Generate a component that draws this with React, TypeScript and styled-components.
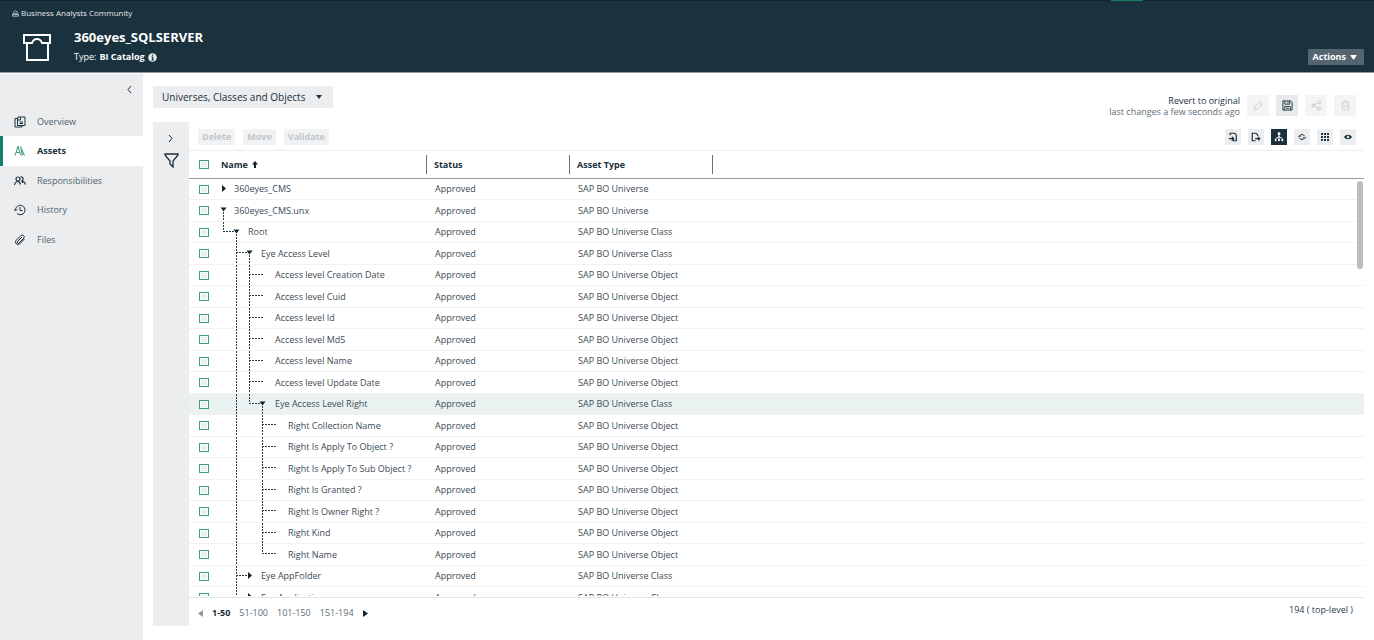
import React from 'react';
import styled, { createGlobalStyle, css } from 'styled-components';

const Global = createGlobalStyle`
  * { box-sizing: border-box; }
  body { margin: 0; background: #fff; color: #1b303d; font: 12px/16px "Open Sans", "Noto Sans", sans-serif; }
  button { font: inherit; color: inherit; border: 0; padding: 0; background: none; cursor: pointer; }
  a { color: inherit; text-decoration: none; }
`;

const Page = styled.div`
  height: 100vh;
  display: flex;
  flex-direction: column;
  overflow: hidden;
`;

/* ---------- header ---------- */
const Header = styled.header`
  flex: none;
  height: 73px;
  background: #1a313e;
  color: #fff;
  border-top: 1px solid #12222d;
  border-bottom: 1px solid #8d989f;
  display: grid;
  grid-template-columns: 74px 1fr auto;
  grid-template-rows: 24px 1fr;
  position: relative;
`;
const ActiveMark = styled.span`
  position: absolute;
  top: -1px;
  right: 231px;
  width: 32px;
  height: 1px;
  background: #16805f;
`;
const Crumb = styled.a`
  grid-column: 1 / -1;
  display: flex;
  align-items: center;
  gap: 2px;
  padding-left: 12px;
  font-size: 8px;
  line-height: 12px;
  color: #e4e9ec;
`;
const Logo = styled.div`
  padding: 9px 0 0 23px;
  line-height: 0;
`;
const Title = styled.h1`
  margin: 3px 0 0;
  font-size: 13px;
  line-height: 18px;
  font-weight: 700;
`;
const TypeLine = styled.div`
  display: flex;
  align-items: center;
  gap: 3px;
  margin-top: 3px;
  font-size: 9px;
  line-height: 16px;
`;
const ActionsButton = styled.button`
  align-self: end;
  display: flex;
  align-items: center;
  gap: 4px;
  height: 16px;
  margin: 0 10px 7px 0;
  padding: 0 7px 0 5px;
  background: #54656f;
  color: #fff;
  font-size: 9px;
  font-weight: 700;
`;

/* ---------- sidebar ---------- */
const Body = styled.div`
  flex: 1;
  min-height: 0;
  display: flex;
`;
const Sidebar = styled.nav`
  flex: none;
  width: 143px;
  margin-top: 1px;
  background: #ebedee;
`;
const Collapse = styled.button`
  display: block;
  margin: 9px 10px 12px auto;
  width: 8px;
  height: 12px;
  line-height: 0;
`;
const NavItem = styled.a<{ $active?: boolean }>`
  display: flex;
  align-items: center;
  gap: 11px;
  height: 29px;
  padding-left: 11px;
  border-left: 3px solid transparent;
  font-size: 9px;
  color: #4f626d;
  &:nth-of-type(even) { height: 30px; }
  svg { flex: none; color: #1b303d; }
  ${p => p.$active && css`
    background: #fff;
    border-color: #12806a;
    color: #1b303d;
    font-weight: 700;
    svg { color: #2c9379; }
  `}
`;

/* ---------- main ---------- */
const Main = styled.main`
  flex: 1;
  min-width: 0;
  display: flex;
  flex-direction: column;
  padding: 13px 10px 14px 10px;
`;
const TopBar = styled.div`
  display: flex;
  justify-content: space-between;
  height: 36px;
`;
const ViewSelect = styled.button`
  display: flex;
  align-items: center;
  gap: 11px;
  height: 22px;
  padding: 0 11px 0 9px;
  background: #ebedee;
  font-size: 10px;
`;
const TopActions = styled.div`
  display: flex;
  align-items: flex-start;
  gap: 7px;
  padding: 9px 8px 0 0;
`;
const Revert = styled.div`
  display: flex;
  flex-direction: column;
  align-items: flex-end;
  font-size: 9px;
  line-height: 11px;
  color: #5d6e78;
  button { color: #1b303d; line-height: 11px; }
`;
const SquareButton = styled.button<{ $faded?: boolean }>`
  display: grid;
  place-items: center;
  width: 22px;
  height: 21px;
  background: ${p => (p.$faded ? '#f3f4f5' : '#e8ebec')};
  color: ${p => (p.$faded ? '#c9ced1' : '#1b303d')};
`;
const Panel = styled.div`
  flex: 1;
  min-height: 0;
  display: flex;
`;
const FilterRail = styled.aside`
  flex: none;
  width: 36px;
  padding-top: 10px;
  display: flex;
  flex-direction: column;
  align-items: center;
  gap: 9px;
  background: #ebedee;
  button { line-height: 0; }
`;
const GridArea = styled.section`
  flex: 1;
  min-width: 0;
  display: flex;
  flex-direction: column;
`;
const Toolbar = styled.div`
  flex: none;
  display: flex;
  align-items: flex-start;
  height: 28px;
  padding: 7px 8px 0 9px;
`;
const TextActions = styled.div`
  flex: 1;
  display: flex;
  gap: 8px;
`;
const ToolActions = styled.div`
  display: flex;
  gap: 7px;
`;
const TextButton = styled.button`
  height: 16px;
  padding: 0 4px;
  background: #f1f2f3;
  color: #c0c7cb;
  font-size: 9px;
  line-height: 16px;
  font-weight: 700;
`;
const ToolButton = styled.button<{ $on?: boolean }>`
  display: grid;
  place-items: center;
  width: 16px;
  height: 16px;
  background: ${p => (p.$on ? '#1b313e' : '#ebedee')};
  color: ${p => (p.$on ? '#fff' : '#1b313e')};
`;
const Scroller = styled.div`
  flex: 1;
  min-height: 0;
  position: relative;
  display: flex;
  border-top: 1px solid #eceeef;
`;
const Viewport = styled.div`
  flex: 1;
  min-width: 0;
  overflow-y: auto;
  scrollbar-width: none;
`;
const Thumb = styled.span`
  position: absolute;
  top: 30px;
  right: 1px;
  width: 6px;
  height: 88px;
  border-radius: 3px;
  background: #bcbcbc;
`;
const Table = styled.table`
  width: 100%;
  table-layout: fixed;
  border-collapse: separate;
  border-spacing: 0;
  font-size: 9px;
  line-height: 12px;
`;
const Col = styled.col<{ $w?: number }>`
  width: ${p => (p.$w ? `${p.$w}px` : 'auto')};
`;
const Th = styled.th`
  position: sticky;
  top: 0;
  z-index: 1;
  height: 28px;
  padding: 0;
  background: #fff;
  border-bottom: 1px solid #8f9ca3;
  text-align: left;
  font-weight: 700;
`;
const CheckTh = styled(Th)`
  padding-left: 10px;
`;
const HeadCell = styled.div<{ $divided?: boolean }>`
  display: flex;
  align-items: center;
  gap: 4px;
  height: 19px;
  padding-left: ${p => (p.$divided ? 7 : 1)}px;
  border-left: 1px solid ${p => (p.$divided ? '#62747e' : 'transparent')};
`;
const Row = styled.tr<{ $hover?: boolean }>`
  height: 21px;
  background: ${p => (p.$hover ? '#eaf3f1' : '#fff')};
  &:nth-child(even) { height: 22px; }
`;
const Td = styled.td`
  padding: 0 0 0 9px;
  border-bottom: 1px solid #eff1f2;
  color: #3c4b55;
  white-space: nowrap;
`;
const CheckTd = styled(Td)`
  line-height: 0;
  vertical-align: middle;
  padding-left: 10px;
`;
const Check = styled.input`
  appearance: none;
  display: block;
  width: 10px;
  height: 9px;
  margin: 0;
  border: 1px solid #3f9c85;
  background: #e6f2ef;
  box-shadow: inset 0 0 0 1px #fff;
`;
const NameTd = styled(Td)`
  padding: 0;
  overflow: hidden;
`;
const NameBox = styled.div<{ $depth: number }>`
  display: flex;
  align-items: center;
  height: 20px;
  gap: ${p => 4 + Math.ceil(p.$depth / 2)}px;
  svg { flex: none; align-self: flex-start; }
  tr:nth-child(even) & { height: 21px; }
`;

const Footer = styled.footer`
  flex: none;
  display: flex;
  align-items: center;
  gap: 9px;
  height: 29px;
  margin-top: 1px;
  padding: 2px 11px 0 9px;
  border-top: 1px solid #e3e6e8;
  font-size: 9px;
  color: #5d6e78;
  button { line-height: 16px; }
  button[aria-current] { font-weight: 700; color: #1b303d; }
`;
const ArrowButton = styled.button`
  display: flex;
`;
const Total = styled.span`
  margin-left: auto;
  align-self: flex-start;
  padding-top: 2px;
  color: #2c404c;
`;

/* ---------- icons ---------- */
type IconProps = { w?: number; h?: number; box?: string; children: React.ReactNode; sw?: number };
const Icon = ({ w = 12, h, box = '0 0 24 24', sw = 2, children }: IconProps) => (
  <svg width={w} height={h ?? w} viewBox={box} fill="none" stroke="currentColor" strokeWidth={sw} aria-hidden="true">
    {children}
  </svg>
);
const Arrow = ({ dir, w = 7, color = 'currentColor' }: { dir: 'down' | 'left' | 'right'; w?: number; color?: string }) => {
  const d = { down: 'M0 0H8L4 5Z', left: 'M5 0V8L0 4Z', right: 'M0 0V8L5 4Z' }[dir];
  const down = dir === 'down';
  return (
    <svg width={down ? w : w - 2} height={down ? w - 2 : w} viewBox={down ? '0 0 8 5' : '0 0 5 8'} preserveAspectRatio="none" aria-hidden="true">
      <path d={d} fill={color} />
    </svg>
  );
};

/* ---------- data ---------- */
type Node = {
  name: string;
  depth: number;
  type: string;
  open?: boolean;
  branch?: boolean;
  rails: number[];
  last?: boolean;
};
const leaf = (name: string, depth: number, rails: number[], last = false): Node =>
  ({ name, depth, rails, last, type: 'SAP BO Universe Object' });
const U = 'SAP BO Universe';
const C = 'SAP BO Universe Class';
const rows: Node[] = [
  { name: '360eyes_CMS', depth: 0, type: U, branch: true, rails: [] },
  { name: '360eyes_CMS.unx', depth: 0, type: U, branch: true, open: true, rails: [] },
  { name: 'Root', depth: 1, type: C, branch: true, open: true, rails: [], last: true },
  { name: 'Eye Access Level', depth: 2, type: C, branch: true, open: true, rails: [] },
  leaf('Access level Creation Date', 3, [1]),
  leaf('Access level Cuid', 3, [1]),
  leaf('Access level Id', 3, [1]),
  leaf('Access level Md5', 3, [1]),
  leaf('Access level Name', 3, [1]),
  leaf('Access level Update Date', 3, [1]),
  { name: 'Eye Access Level Right', depth: 3, type: C, branch: true, open: true, rails: [1], last: true },
  leaf('Right Collection Name', 4, [1]),
  leaf('Right Is Apply To Object ?', 4, [1]),
  leaf('Right Is Apply To Sub Object ?', 4, [1]),
  leaf('Right Is Granted ?', 4, [1]),
  leaf('Right Is Owner Right ?', 4, [1]),
  leaf('Right Kind', 4, [1]),
  leaf('Right Name', 4, [1], true),
  { name: 'Eye AppFolder', depth: 2, type: C, branch: true, rails: [] },
  { name: 'Eye Application', depth: 2, type: C, branch: true, rails: [] },
];

/* Dashed connectors and the expand arrow drawn in front of a node name. */
const Guides = ({ node }: { node: Node }) => {
  const { depth, rails, last, branch, open } = node;
  const x = 4 + depth * 13;
  const px = x - 13;
  return (
    <svg width={x + 7} height="20" viewBox={`0 0 ${x + 7} 20`} aria-hidden="true">
      <g stroke="#2b3e49" strokeWidth="1" strokeDasharray="2 1" fill="none">
        {rails.map(r => <path key={r} d={`M${4.5 + r * 13} 0V20`} />)}
        {depth > 0 && <path d={`M${px + 0.5} 0V${last ? 10 : 20}`} />}
        {depth > 0 && <path d={`M${px} 9.500H${branch ? x - 2 : x + 1}`} />}
        {open && <path d={`M${x + 0.5} 12V20`} />}
      </g>
      {branch && (open
        ? <path d={`M${x - 2.5} 7.500H${x + 3.5}L${x + 0.5} 11.500Z`} fill="#12232e" />
        : <path d={`M${x - 1} 6V13L${x + 3} 9.500Z`} fill="#12232e" />)}
    </svg>
  );
};

const navItems = [
  { label: 'Overview', icon: <Icon sw={2}><path d="M7 5H2V22H16V19" /><path d="M8 2H22V19H7V8Z" /><path d="M8 8H13V3M11 12H18M11 15H18" /></Icon> },
  { label: 'Assets', icon: <Icon sw={2}><path d="M2 21L8 3L14 21M5 15H11M13 3L21 21M8 3L9 7M14 8L17 21" /></Icon> },
  { label: 'Responsibilities', icon: <Icon sw={2.4}><circle cx="8" cy="8" r="4" /><path d="M1 20C2 15 5 13 8 13S12 15 13 19" /><path d="M13 4A4 4 0 1 1 15 12M15 12C19 12 22 15 23 19M15 12L18 16" /></Icon> },
  { label: 'History', icon: <Icon sw={2}><path d="M3 12A9.500 9.500 0 1 1 6 19M0 11L3 14L6 11M12 6V13H17" /></Icon> },
  { label: 'Files', icon: <Icon sw={2}><path d="M21 10L11 20A5 5 0 0 1 4 13L14 3A4 4 0 0 1 20 8L10 18A2 2 0 0 1 7 15L16 6" /></Icon> },
];

export default function App() {
  return (
    <Page>
      <Global />
      <Header>
        <ActiveMark />
        <Crumb href="#community">
          <Icon w={7} sw={2.500}><path d="M12 2L20 9V13M4 13V9L12 2M2 21V15H22V21ZM8 15A4 4 0 0 1 16 15" /></Icon>
          Business Analysts Community
        </Crumb>
        <Logo>
          <svg width="28" height="28" viewBox="0 0 28 28" fill="none" stroke="#fff" strokeWidth="2" aria-hidden="true">
            <path d="M4 9V26H25V9" />
            <path d="M9 9H1V1H27V9H19C18 6 16 5 14 5S10 6 9 9Z" />
          </svg>
        </Logo>
        <div>
          <Title>360eyes_SQLSERVER</Title>
          <TypeLine>
            <span>Type:</span>
            <b>BI Catalog</b>
            <svg width="9" height="9" viewBox="0 0 9 9" aria-hidden="true">
              <circle cx="4.500" cy="4.500" r="4.300" fill="#e8ecee" />
              <path d="M4.500 1.500V2.700M3.500 4H4.700V7M3.300 7H6" stroke="#1b313e" strokeWidth="1.200" fill="none" />
            </svg>
          </TypeLine>
        </div>
        <ActionsButton>Actions <Arrow dir="down" /></ActionsButton>
      </Header>
      <Body>
        <Sidebar aria-label="Asset sections">
          <Collapse aria-label="Collapse sidebar">
            <Icon w={8} h={12} box="0 0 8 12" sw={1}><path d="M6 3L3 6.500L6 10" /></Icon>
          </Collapse>
          {navItems.map(n => (
            <NavItem key={n.label} href={`#${n.label.toLowerCase()}`} $active={n.label === 'Assets'}>
              {n.icon}
              {n.label}
            </NavItem>
          ))}
        </Sidebar>
        <Main>
          <TopBar>
            <ViewSelect aria-haspopup="listbox">
              Universes, Classes and Objects <Arrow dir="down" w={6} />
            </ViewSelect>
            <TopActions>
              <Revert>
                <button>Revert to original</button>
                <span>last changes a few seconds ago</span>
              </Revert>
              <SquareButton $faded disabled aria-label="Edit"><Icon w={11}><path d="M2 22L4 15L16 3L21 8L9 20ZM14 6L18 10" /></Icon></SquareButton>
              <SquareButton aria-label="Save"><Icon w={11} sw={2}><path d="M2 2H19L22 5V22H2ZM6 2V9H17V2M13 3V7M6 22V14H18V22M9 18H15" /></Icon></SquareButton>
              <SquareButton $faded disabled aria-label="Share"><Icon w={11} sw={2.2}><circle cx="5" cy="12" r="3" /><circle cx="18" cy="5" r="3" /><circle cx="18" cy="19" r="3" /><path d="M8 10L15 6M8 14L15 18" /></Icon></SquareButton>
              <SquareButton $faded disabled aria-label="Delete view"><Icon w={11} sw={1.8}><path d="M3 6H21M5 6V22H19V6M9 6V2H15V6M9 10V18M15 10V18" /></Icon></SquareButton>
            </TopActions>
          </TopBar>
          <Panel>
            <FilterRail>
              <button aria-label="Expand filters"><Icon w={8} h={12} box="0 0 8 12" sw={1}><path d="M2 3L5 6.500L2 10" /></Icon></button>
              <button aria-label="Filter"><Icon w={15} box="0 0 15 15" sw={1.300}><path d="M1 1H14V2L9 8V14L6 11V8L1 2Z" /></Icon></button>
            </FilterRail>
            <GridArea>
              <Toolbar>
                <TextActions>
                  <TextButton disabled>Delete</TextButton>
                  <TextButton disabled>Move</TextButton>
                  <TextButton disabled>Validate</TextButton>
                </TextActions>
                <ToolActions>
                  <ToolButton aria-label="Import"><Icon w={10} sw={2.800}><path d="M5 8V3H16L20 7V21H12M2 16H13M9 11L14 16L9 21" /></Icon></ToolButton>
                  <ToolButton aria-label="Export"><Icon w={10} sw={2.800}><path d="M16 10V7L12 3H3V21H11M10 16H21M17 12L21 16L17 20" /></Icon></ToolButton>
                  <ToolButton $on aria-label="Hierarchy"><Icon w={10} sw={2.400}><path d="M12 3V20M4 20V16L12 11L20 16V20" /><path d="M10 2H14V6H10ZM3 18H5V21H3ZM11 18H13V21H11ZM19 18H21V21H19Z" fill="currentColor" /></Icon></ToolButton>
                  <ToolButton aria-label="Refresh"><Icon w={10} sw={2.400}><path d="M6 10A6.500 6.500 0 0 1 18 10M18 14A6.500 6.500 0 0 1 6 14M3 12L6 9L9 12M15 12L18 15L21 12" /></Icon></ToolButton>
                  <ToolButton aria-label="Columns"><Icon w={8} box="0 0 8 8" sw={2}><path d="M0 1H8M0 4H8M0 7H8" strokeDasharray="2 1" /></Icon></ToolButton>
                  <ToolButton aria-label="Visibility"><Icon w={8} h={6} box="0 0 8 6" sw={0}><path fillRule="evenodd" fill="currentColor" d="M0 3C2 0 6 0 8 3C6 6 2 6 0 3ZM4 1.800A1.200 1.200 0 1 0 4 4.200A1.200 1.200 0 1 0 4 1.800Z" /></Icon></ToolButton>
                </ToolActions>
              </Toolbar>
              <Scroller>
                <Viewport>
                  <Table>
                    <colgroup>
                      <Col $w={30} />
                      <Col $w={207} />
                      <Col $w={143} />
                      <Col $w={143} />
                      <Col />
                    </colgroup>
                    <thead>
                      <tr>
                        <CheckTh><Check type="checkbox" aria-label="Select all" /></CheckTh>
                        <Th aria-sort="ascending">
                          <HeadCell>
                            Name
                            <svg width="6" height="7" viewBox="0 0 6 7" aria-hidden="true"><path d="M3 0L6 3.500H4V7H2V3.500H0Z" fill="#12232e" /></svg>
                          </HeadCell>
                        </Th>
                        <Th><HeadCell $divided>Status</HeadCell></Th>
                        <Th><HeadCell $divided>Asset Type</HeadCell></Th>
                        <Th><HeadCell $divided /></Th>
                      </tr>
                    </thead>
                    <tbody>
                      {rows.map(r => (
                        <Row key={r.name} $hover={r.name === 'Eye Access Level Right'}>
                          <CheckTd><Check type="checkbox" aria-label={`Select ${r.name}`} /></CheckTd>
                          <NameTd><NameBox $depth={r.depth}><Guides node={r} />{r.name}</NameBox></NameTd>
                          <Td>Approved</Td>
                          <Td>{r.type}</Td>
                          <Td />
                        </Row>
                      ))}
                    </tbody>
                  </Table>
                </Viewport>
                <Thumb />
              </Scroller>
              <Footer>
                <ArrowButton disabled aria-label="Previous page"><Arrow dir="left" color="#8f999f" /></ArrowButton>
                <button aria-current="page">1-50</button>
                <button>51-100</button>
                <button>101-150</button>
                <button>151-194</button>
                <ArrowButton aria-label="Next page"><Arrow dir="right" color="#12232e" /></ArrowButton>
                <Total>194 ( top-level )</Total>
              </Footer>
            </GridArea>
          </Panel>
        </Main>
      </Body>
    </Page>
  );
}
